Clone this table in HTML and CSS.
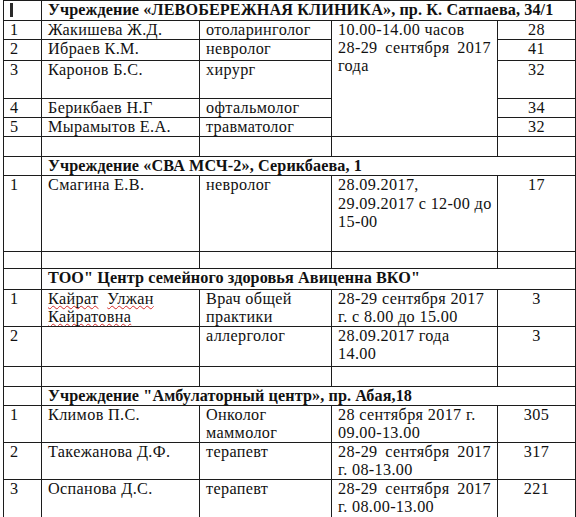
FILE: index.html
```html
<!DOCTYPE html>
<html lang="ru">
<head>
<meta charset="utf-8">
<title>Приём специалистов</title>
<link rel="stylesheet" href="styles.css">
</head>
<body>
<table class="grid">
  <colgroup>
    <col class="c-num"><col class="c-name"><col class="c-spec"><col class="c-time"><col class="c-qty">
  </colgroup>
  <tr class="r20"><td><span class="marker"></span></td><td colspan="4" class="title">Учреждение «ЛЕВОБЕРЕЖНАЯ КЛИНИКА», пр. К. Сатпаева, 34/1</td></tr>
  <tr class="r19"><td>1</td><td>Жакишева Ж.Д.</td><td>отоларинголог</td><td rowspan="5"><span class="line">10.00-14.00 часов</span><span class="line just">28-29 сентября 2017</span><span class="line">года</span></td><td class="qty">28</td></tr>
  <tr class="r21"><td>2</td><td>Ибраев К.М.</td><td>невролог</td><td class="qty">41</td></tr>
  <tr class="r38"><td>3</td><td>Каронов Б.С.</td><td>хирург</td><td class="qty">32</td></tr>
  <tr class="r19"><td>4</td><td>Берикбаев Н.Г</td><td>офтальмолог</td><td class="qty">34</td></tr>
  <tr class="r19"><td>5</td><td>Мырамытов Е.А.</td><td>травматолог</td><td class="qty">32</td></tr>
  <tr class="r20"><td></td><td></td><td></td><td></td><td></td></tr>

  <tr class="r19"><td></td><td colspan="4" class="title">Учреждение «СВА МСЧ-2», Серикбаева, 1</td></tr>
  <tr class="r76"><td>1</td><td>Смагина Е.В.</td><td>невролог</td><td class="tall"><span class="line">28.09.2017,</span><span class="line just">29.09.2017 с 12-00 до</span><span class="line">15-00</span></td><td class="qty">17</td></tr>
  <tr class="r17"><td></td><td></td><td></td><td></td><td></td></tr>

  <tr class="r21"><td></td><td colspan="4" class="title">ТОО" Центр семейного здоровья Авиценна ВКО"</td></tr>
  <tr class="r37"><td>1</td><td><span class="spell">Кайрат</span>&nbsp; <span class="spell">Улжан</span><br><span class="spell">Кайратовна</span></td><td>Врач общей<br>практики</td><td><span class="line">28-29 сентября 2017</span><span class="line">г. с 8.00 до 15.00</span></td><td class="qty">3</td></tr>
  <tr class="r40"><td>2</td><td></td><td>аллерголог</td><td><span class="line">28.09.2017 года</span><span class="line">14.00</span></td><td class="qty">3</td></tr>
  <tr class="r20"><td></td><td></td><td></td><td></td><td></td></tr>

  <tr class="r19"><td></td><td colspan="4" class="title">Учреждение "Амбулаторный центр», пр. Абая,18</td></tr>
  <tr class="r37"><td>1</td><td>Климов П.С.</td><td>Онколог<br>маммолог</td><td><span class="line">28 сентября 2017 г.</span><span class="line">09.00-13.00</span></td><td class="qty">305</td></tr>
  <tr class="r37"><td>2</td><td>Такежанова Д.Ф.</td><td>терапевт</td><td><span class="line just">28-29 сентября 2017</span><span class="line">г. 08-13.00</span></td><td class="qty">317</td></tr>
  <tr class="r40"><td>3</td><td>Оспанова Д.С.</td><td>терапевт</td><td><span class="line just">28-29 сентября 2017</span><span class="line">г. 08.00-13.00</span></td><td class="qty">221</td></tr>
</table>
</body>
</html>
```
FILE: styles.css
```css
html, body {
  margin: 0;
  padding: 0;
  background: #fff;
}

body {
  font-family: "Liberation Serif", "Times New Roman", serif;
  font-size: 16.2px;
  letter-spacing: 0.35px;
  line-height: 18px;
  color: #111;
}

.grid {
  margin-left: 3px;
  width: 573px;
  table-layout: fixed;
  border-collapse: separate;
  border-spacing: 0;
  border-top: 1px solid #1c1c1c;
  border-left: 1px solid #1c1c1c;
}

.c-num { width: 38px; }
.c-name { width: 158px; }
.c-spec { width: 132px; }
.c-time { width: 166px; }
.c-qty { width: 78px; }

.grid td {
  vertical-align: top;
  padding: 0 6px;
  border-right: 1px solid #1c1c1c;
  border-bottom: 1px solid #1c1c1c;
  white-space: nowrap;
  overflow: hidden;
}

.title {
  font-weight: bold;
  letter-spacing: 0.1px;
}

.qty {
  text-align: center;
}

.line {
  display: block;
}

.tall .line {
  line-height: 18.5px;
}

.just {
  text-align: justify;
  text-align-last: justify;
}

.spell {
  text-decoration: underline wavy #d42a2a;
  text-decoration-thickness: 1px;
  text-underline-offset: 1px;
  text-decoration-skip-ink: none;
}

.marker {
  display: block;
  width: 3px;
  height: 14px;
  margin-top: 2px;
  background: #2a2a2a;
}

.r17 { height: 17px; }
.r19 { height: 19px; }
.r20 { height: 20px; }
.r21 { height: 21px; }
.r37 { height: 37px; }
.r38 { height: 38px; }
.r40 { height: 40px; }
.r76 { height: 76px; }
```
